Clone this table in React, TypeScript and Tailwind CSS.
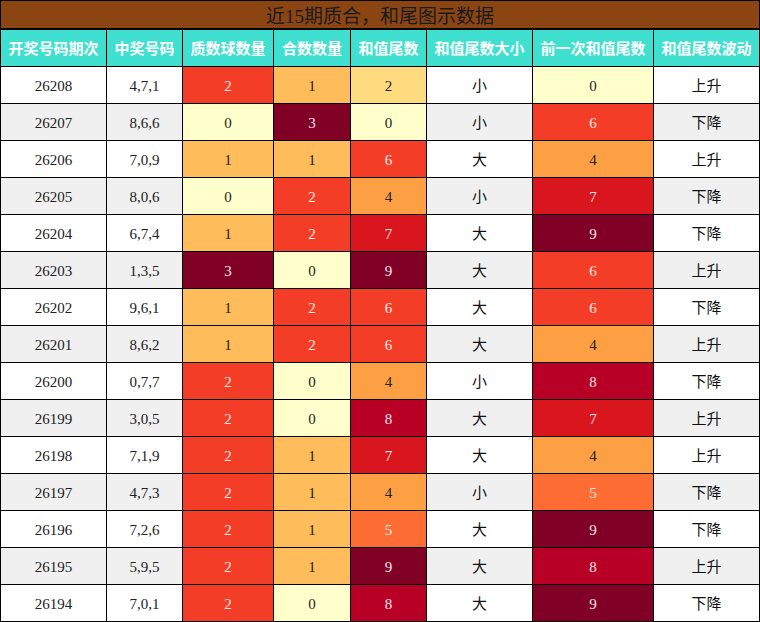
const rows: [string, string, number, number, number, string, number, string][] = [
  ['26208', '4,7,1', 2, 1, 2, '小', 0, '上升'],
  ['26207', '8,6,6', 0, 3, 0, '小', 6, '下降'],
  ['26206', '7,0,9', 1, 1, 6, '大', 4, '上升'],
  ['26205', '8,0,6', 0, 2, 4, '小', 7, '下降'],
  ['26204', '6,7,4', 1, 2, 7, '大', 9, '下降'],
  ['26203', '1,3,5', 3, 0, 9, '大', 6, '上升'],
  ['26202', '9,6,1', 1, 2, 6, '大', 6, '下降'],
  ['26201', '8,6,2', 1, 2, 6, '大', 4, '上升'],
  ['26200', '0,7,7', 2, 0, 4, '小', 8, '下降'],
  ['26199', '3,0,5', 2, 0, 8, '大', 7, '上升'],
  ['26198', '7,1,9', 2, 1, 7, '大', 4, '上升'],
  ['26197', '4,7,3', 2, 1, 4, '小', 5, '下降'],
  ['26196', '7,2,6', 2, 1, 5, '大', 9, '下降'],
  ['26195', '5,9,5', 2, 1, 9, '大', 8, '上升'],
  ['26194', '7,0,1', 2, 0, 8, '大', 9, '下降'],
];

const headers = ['开奖号码期次', '中奖号码', '质数球数量', '合数数量', '和值尾数', '和值尾数大小', '前一次和值尾数', '和值尾数波动'];

// count columns (0-3)
const countColor: Record<number, string> = {
  0: 'bg-[#ffffcc] text-[#222]',
  1: 'bg-[#febc5a] text-[#222]',
  2: 'bg-[#f43d26] text-white/90',
  3: 'bg-[#800026] text-white/90',
};

// tail columns (0-9)
const tailColor: Record<number, string> = {
  0: 'bg-[#ffffcc] text-[#222]',
  1: 'bg-[#ffeda0] text-[#222]',
  2: 'bg-[#fedb7e] text-[#222]',
  3: 'bg-[#febc5a] text-[#222]',
  4: 'bg-[#fd9f43] text-[#222]',
  5: 'bg-[#fc6c33] text-white/90',
  6: 'bg-[#f43d26] text-white/90',
  7: 'bg-[#d9161e] text-white/90',
  8: 'bg-[#b80026] text-white/90',
  9: 'bg-[#800026] text-white/90',
};

const grid = 'grid grid-cols-[105px_75px_90px_76px_75px_105px_120px_105px] gap-px';
const cell = 'flex items-center justify-center pt-[2px]';

export default function App() {
  return (
    <div
      className="w-[760px] h-[622px] bg-black p-px flex flex-col"
      style={{ fontFamily: '"Liberation Serif", "Noto Sans CJK SC", serif' }}
    >
      <div className="h-[27px] mb-[2px] pt-[2px] bg-[#8b4513] text-[#1a1a1a] text-[19px] leading-[27px] text-center">
        近15期质合，和尾图示数据
      </div>
      <div className={`${grid} h-[36px]`}>
        {headers.map((h) => (
          <div
            key={h}
            className="bg-[#40e0d0] text-white font-bold text-[15px] flex items-center justify-center"
            style={{ fontFamily: '"Noto Sans CJK SC", sans-serif' }}
          >
            {h}
          </div>
        ))}
      </div>
      {rows.map((r, i) => {
        const base = i % 2 === 0 ? 'bg-white' : 'bg-[#f0f0f0]';
        return (
          <div key={r[0]} className={`${grid} h-[36px] mt-px text-[15px]`}>
            <div className={`${base} text-[#222] ${cell}`}>{r[0]}</div>
            <div className={`${base} text-[#222] ${cell}`}>{r[1]}</div>
            <div className={`${countColor[r[2]]} ${cell}`}>{r[2]}</div>
            <div className={`${countColor[r[3]]} ${cell}`}>{r[3]}</div>
            <div className={`${tailColor[r[4]]} ${cell}`}>{r[4]}</div>
            <div className={`${base} text-[#111] ${cell}`}>{r[5]}</div>
            <div className={`${tailColor[r[6]]} ${cell}`}>{r[6]}</div>
            <div className={`${base} text-[#111] ${cell}`}>{r[7]}</div>
          </div>
        );
      })}
    </div>
  );
}
